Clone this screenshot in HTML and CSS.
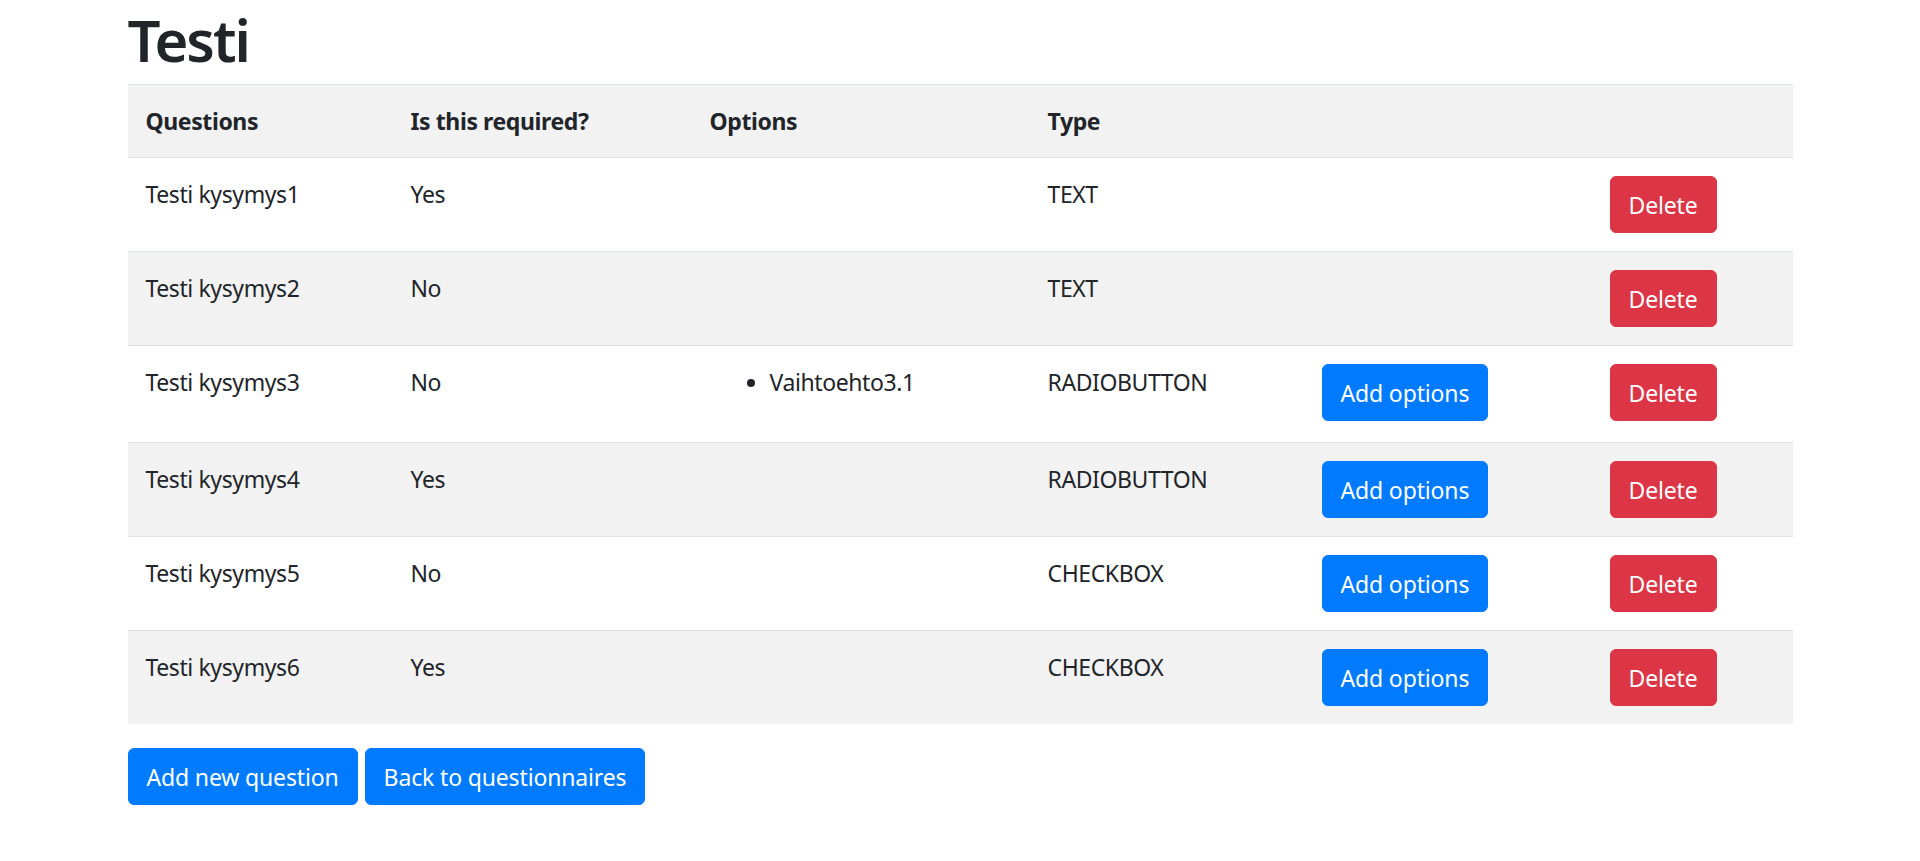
FILE: index.html
```html
<!DOCTYPE html>
<html lang="fi">
<head>
<meta charset="utf-8">
<title>Testi</title>
<link rel="stylesheet" href="styles.css">
</head>
<body>
<div class="container">
  <h1 class="title">Testi</h1>
  <table class="table">
    <colgroup>
      <col class="c1"><col class="c2"><col class="c3"><col class="c4"><col class="c5"><col class="c6">
    </colgroup>
    <tbody>
      <tr class="head">
        <th>Questions</th><th>Is this required?</th><th>Options</th><th>Type</th><th></th><th></th>
      </tr>
      <tr>
        <td>Testi kysymys1</td><td>Yes</td><td></td><td>TEXT</td><td></td>
        <td><button class="btn btn-danger">Delete</button></td>
      </tr>
      <tr class="alt">
        <td>Testi kysymys2</td><td>No</td><td></td><td>TEXT</td><td></td>
        <td><button class="btn btn-danger">Delete</button></td>
      </tr>
      <tr>
        <td>Testi kysymys3</td><td>No</td>
        <td><ul class="opts"><li>Vaihtoehto3.1</li></ul></td>
        <td>RADIOBUTTON</td>
        <td><button class="btn btn-primary">Add options</button></td>
        <td><button class="btn btn-danger">Delete</button></td>
      </tr>
      <tr class="alt">
        <td>Testi kysymys4</td><td>Yes</td><td></td><td>RADIOBUTTON</td>
        <td><button class="btn btn-primary">Add options</button></td>
        <td><button class="btn btn-danger">Delete</button></td>
      </tr>
      <tr>
        <td>Testi kysymys5</td><td>No</td><td></td><td>CHECKBOX</td>
        <td><button class="btn btn-primary">Add options</button></td>
        <td><button class="btn btn-danger">Delete</button></td>
      </tr>
      <tr class="alt">
        <td>Testi kysymys6</td><td>Yes</td><td></td><td>CHECKBOX</td>
        <td><button class="btn btn-primary">Add options</button></td>
        <td><button class="btn btn-danger">Delete</button></td>
      </tr>
    </tbody>
  </table>
  <div class="actions">
    <button class="btn btn-primary">Add new question</button>
    <button class="btn btn-primary">Back to questionnaires</button>
  </div>
</div>
</body>
</html>
```
FILE: styles.css
```css
html, body {
  margin: 0;
  padding: 0;
  background: #fff;
}
body {
  font-family: "Segoe UI", "Noto Sans", "Open Sans", sans-serif;
  font-size: 23px;
  letter-spacing: -0.4px;
  line-height: 36px;
  color: #212529;
}
.container {
  width: 1665px;
  margin: 0 auto;
}
.title {
  margin: 0 0 8px 0;
  padding-top: 4px;
  font-size: 58px;
  line-height: 72px;
  font-weight: 600;
  letter-spacing: -2px;
}
.table {
  width: 1665px;
  border-collapse: collapse;
  table-layout: fixed;
  margin-bottom: 24px;
}
.c1 { width: 265px; }
.c2 { width: 299px; }
.c3 { width: 338px; }
.c4 { width: 274px; }
.c5 { width: 288px; }
.c6 { width: 201px; }
.table th, .table td {
  padding: 18px;
  vertical-align: top;
  border-top: 1px solid #dee2e6;
  text-align: left;
}
.table th {
  font-weight: 700;
}
.head, .alt {
  background: #f2f2f2;
}
.head th {
  border-bottom: 1px solid #dee2e6;
}
.opts {
  margin: 0 0 24px 0;
  padding-left: 60px;
}
.btn {
  display: inline-block;
  font-family: inherit;
  font-size: 23px;
  letter-spacing: -0.15px;
  line-height: 36px;
  padding: 9.5px 18px;
  border: 1px solid transparent;
  border-radius: 6px;
  color: #fff;
  cursor: pointer;
  vertical-align: middle;
}
.btn-primary {
  background: #007bff;
  border-color: #007bff;
}
.btn-danger {
  background: #dc3545;
  border-color: #dc3545;
}
.actions {
  display: flex;
  gap: 7px;
}
```
